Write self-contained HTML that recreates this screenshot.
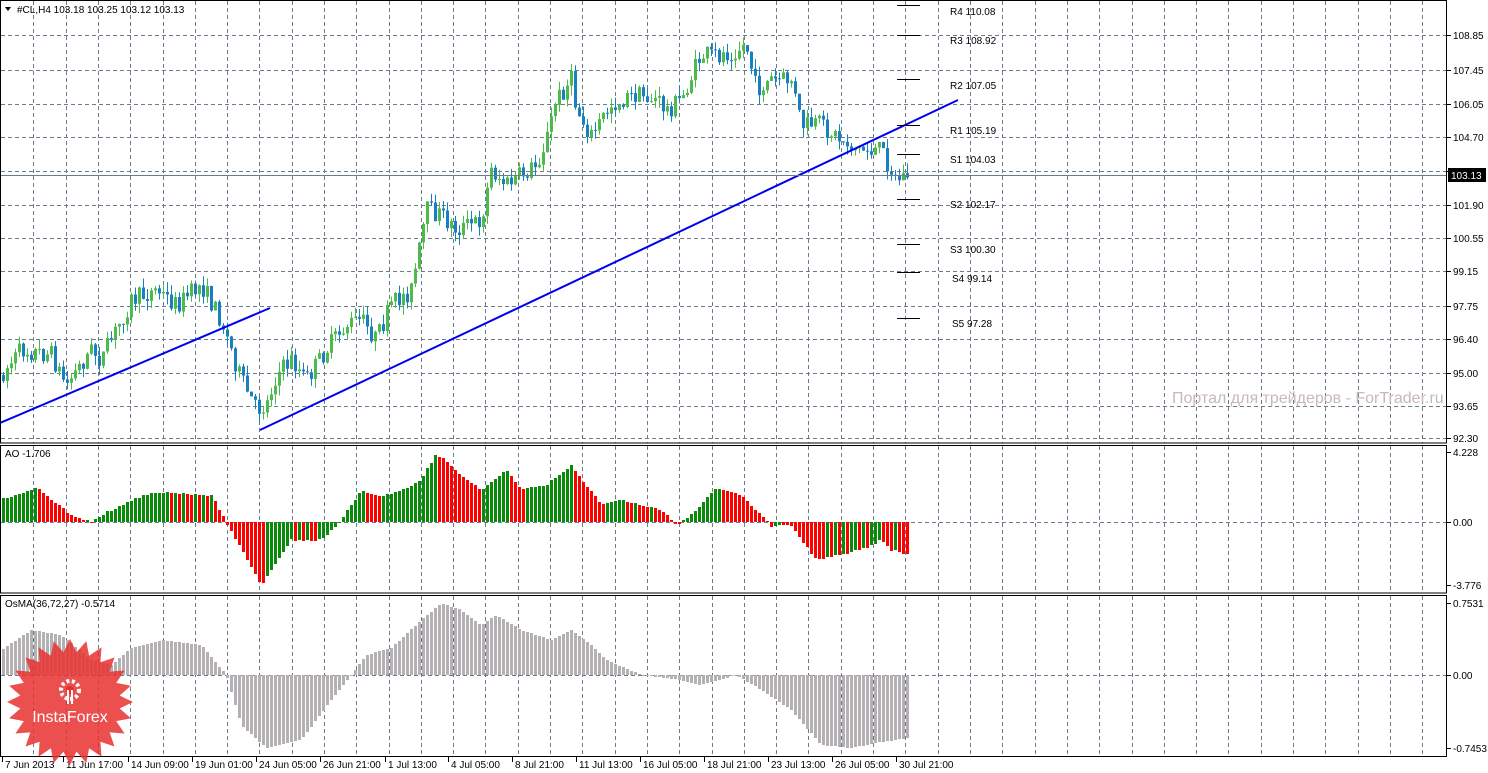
<!DOCTYPE html>
<html><head><meta charset="utf-8"><style>
html,body{margin:0;padding:0;background:#fff;width:1488px;height:773px;overflow:hidden}
svg text{font-family:"Liberation Sans",sans-serif;font-size:10px;fill:#000}
</style></head><body>
<svg id="s" width="1488" height="773" xmlns="http://www.w3.org/2000/svg">
<rect width="1488" height="773" fill="#fff"/>
<g id="grid" stroke="#6c7c8c" stroke-dasharray="4,3" stroke-width="1"></g>
<g id="bars"></g>
<line x1="0" y1="423" x2="270" y2="308" stroke="#0000ee" stroke-width="2"/>
<line x1="260" y1="430" x2="958" y2="100" stroke="#0000ee" stroke-width="2"/>
<line x1="0" y1="175.5" x2="1447" y2="175.5" stroke="#6c7c8c" stroke-width="1"/>
<g stroke="#000" stroke-width="1">
<line x1="897" y1="5.5" x2="920" y2="5.5"/><line x1="897" y1="35.5" x2="920" y2="35.5"/>
<line x1="897" y1="79.5" x2="920" y2="79.5"/><line x1="897" y1="125.5" x2="920" y2="125.5"/>
<line x1="897" y1="154.5" x2="920" y2="154.5"/><line x1="897" y1="199.5" x2="920" y2="199.5"/>
<line x1="897" y1="244.5" x2="920" y2="244.5"/><line x1="897" y1="272.5" x2="920" y2="272.5"/>
<line x1="897" y1="318.5" x2="920" y2="318.5"/>
</g>
<g>
<text x="950" y="15">R4 110.08</text><text x="950" y="44">R3 108.92</text>
<text x="950" y="89">R2 107.05</text><text x="950" y="134">R1 105.19</text>
<text x="950" y="163">S1 104.03</text><text x="950" y="208">S2 102.17</text>
<text x="950" y="253">S3 100.30</text><text x="952" y="282">S4 99.14</text>
<text x="952" y="327">S5 97.28</text>
</g>
<text x="1172" y="403" style="font-size:16px;fill:#c8b8b8">Портал для трейдеров - ForTrader.ru</text>
<g fill="none" stroke="#000" stroke-width="1">
<rect x="0.5" y="0.5" width="1446" height="442.5"/>
<rect x="0.5" y="445.5" width="1446" height="147.5"/>
<rect x="0.5" y="595.5" width="1446" height="161"/>
</g>
<polygon points="5,7 11,7 8,11" fill="#000"/>
<text x="17" y="13">#CL,H4  103.18 103.25 103.12 103.13</text>
<text x="5" y="457">AO -1.706</text>
<text x="5" y="607">OsMA(36,72,27) -0.5714</text>
<g id="ax"></g>
<rect x="1448" y="168" width="38" height="14" fill="#000"/>
<text x="1451" y="179" style="fill:#fff">103.13</text>
<g id="dates"></g>
<g transform="translate(70,702)">
<polygon id="star" fill="#e8312f" opacity="0.85"></polygon>
<circle cx="0" cy="-12" r="9" fill="none" stroke="#fff" stroke-width="4" stroke-dasharray="3,2.5"/>
<circle cx="0" cy="-12" r="4" fill="#e8312f"/>
<rect x="-3" y="-12" width="2" height="14" fill="#fff"/><rect x="1" y="-12" width="2" height="14" fill="#fff"/>
<text x="0" y="20" text-anchor="middle" style="font-size:16px;fill:#fff">InstaForex</text>
</g>
</svg>
<script>
var NS="http://www.w3.org/2000/svg";
function el(p,t,a){var e=document.createElementNS(NS,t);for(var k in a)e.setAttribute(k,a[k]);p.appendChild(e);return e;}
var grid=document.getElementById('grid');
for(var k=1;k<=44;k++){var x=Math.round(1+32.3*k)+0.5;if(x>1446)break;
 el(grid,'line',{x1:x,y1:1,x2:x,y2:443});el(grid,'line',{x1:x,y1:446,x2:x,y2:593});el(grid,'line',{x1:x,y1:596,x2:x,y2:757});}
var ys=[35,70,104,137,171,205,238,271,306,339,373,406,438];
var ps=["108.85","107.45","106.05","104.70","103.30","101.90","100.55","99.15","97.75","96.40","95.00","93.65","92.30"];
var ax=document.getElementById('ax');
ys.forEach(function(y,i){el(grid,'line',{x1:1,y1:y+.5,x2:1446,y2:y+.5});
 el(ax,'line',{x1:1447,y1:y+.5,x2:1451,y2:y+.5,stroke:'#000'});var t=el(ax,'text',{x:1453,y:y+4});t.textContent=ps[i];});
el(grid,'line',{x1:1,y1:522.5,x2:1446,y2:522.5});el(grid,'line',{x1:1,y1:675.5,x2:1446,y2:675.5});
[[452,"4.228"],[522,"0.00"],[585,"-3.776"],[603,"0.7531"],[675,"0.00"],[748,"-0.7453"]].forEach(function(a){
 el(ax,'line',{x1:1447,y1:a[0]+.5,x2:1451,y2:a[0]+.5,stroke:'#000'});var t=el(ax,'text',{x:1453,y:a[0]+4});t.textContent=a[1];});
var dl=[[2,"7 Jun 2013"],[63,"11 Jun 17:00"],[128,"14 Jun 09:00"],[192,"19 Jun 01:00"],[256,"24 Jun 05:00"],[320,"26 Jun 21:00"],[385,"1 Jul 13:00"],[448,"4 Jul 05:00"],[512,"8 Jul 21:00"],[576,"11 Jul 13:00"],[640,"16 Jul 05:00"],[704,"18 Jul 21:00"],[768,"23 Jul 13:00"],[832,"26 Jul 05:00"],[896,"30 Jul 21:00"]];
var dg=document.getElementById('dates');
dl.forEach(function(d){el(dg,'line',{x1:d[0]+.5,y1:757,x2:d[0]+.5,y2:762,stroke:'#000'});var t=el(dg,'text',{x:d[0]+3,y:768});t.textContent=d[1];});
function interp(pts,x){for(var i=1;i<pts.length;i++){if(x<=pts[i][0]){var a=pts[i-1],b=pts[i];return a[1]+(b[1]-a[1])*(x-a[0])/(b[0]-a[0]);}}return pts[pts.length-1][1];}
var seed=7;function rnd(){seed=(seed*16807)%2147483647;return seed/2147483647;}
var price=[[0,375],[20,350],[50,355],[65,385],[90,350],[100,360],[130,300],[155,290],[175,305],[200,285],[220,320],[240,380],[255,410],[265,405],[275,375],[290,360],[305,380],[325,350],[345,325],[360,320],[375,340],[390,305],[410,290],[418,250],[425,210],[440,215],[455,230],[480,220],[490,170],[505,185],[520,175],[535,165],[545,140],[555,100],[570,80],[575,110],[590,135],[610,105],[635,95],[655,100],[665,110],[680,100],[700,55],[720,55],[745,45],[755,90],[770,80],[790,80],[800,125],[820,125],[840,140],[860,150],[880,150],[895,180],[908,173]];
var ao=[[0,500],[35,487],[70,515],[90,522],[100,515],[150,492],[210,495],[225,522],[260,585],[290,540],[320,540],[340,520],[360,490],[375,495],[390,495],[420,480],[435,453],[460,475],[480,490],[505,470],[520,490],[545,485],[570,465],[600,505],[620,500],[660,510],[675,525],[690,515],[715,488],[740,495],[760,515],[770,527],[790,525],[800,540],[815,560],[835,555],[860,550],[880,540],[890,550],[908,555]];
var os=[[0,650],[30,630],[60,635],[90,660],[110,665],[130,648],[160,640],[200,645],[225,675],[240,725],[265,748],[300,740],[330,700],[350,675],[365,655],[390,648],[420,620],[440,603],[460,610],[480,625],[495,615],[520,630],[550,640],[570,630],[590,645],[605,660],[640,675],[680,680],[700,685],[735,675],[760,690],[790,710],[820,745],[850,748],[880,742],[908,738]];
var bars=document.getElementById('bars');var prev=375,prevA=null;
for(var i=0;i<227;i++){var x=2+4*i;
 var o=Math.round(interp(os,x));el(bars,'rect',{x:x,y:Math.min(o,675),width:3,height:Math.max(1,Math.abs(o-675)),fill:'#b4b0b4'});
 var a=Math.round(interp(ao,x)+(rnd()-0.5)*2);var col;
 if(a<522) col=(prevA===null||a<=prevA)?'#0a8a0a':'#ff0000'; else col=(a>=prevA)?'#ff0000':'#0a8a0a';
 prevA=a;el(bars,'rect',{x:x,y:Math.min(a,522),width:3,height:Math.max(1,Math.abs(a-522)),fill:col});
 var c=interp(price,x)+(rnd()-0.5)*20;var op=prev;prev=c;
 var hi=Math.min(op,c)-rnd()*10,lo=Math.max(op,c)+rnd()*10;var bull=c<op;var cc=bull?'#4cbb4c':'#1880c0';
 el(bars,'line',{x1:x+1.5,y1:hi,x2:x+1.5,y2:lo,stroke:cc,'stroke-width':1});
 el(bars,'rect',{x:x,y:Math.min(op,c),width:3,height:Math.max(1,Math.abs(op-c)),fill:cc});
}
var pts=[];for(var j=0;j<48;j++){var r=j%2?50:63;var an=j*Math.PI/24;pts.push((r*Math.sin(an)).toFixed(1)+','+(-r*Math.cos(an)).toFixed(1));}
document.getElementById('star').setAttribute('points',pts.join(' '));
</script>
</body></html>
